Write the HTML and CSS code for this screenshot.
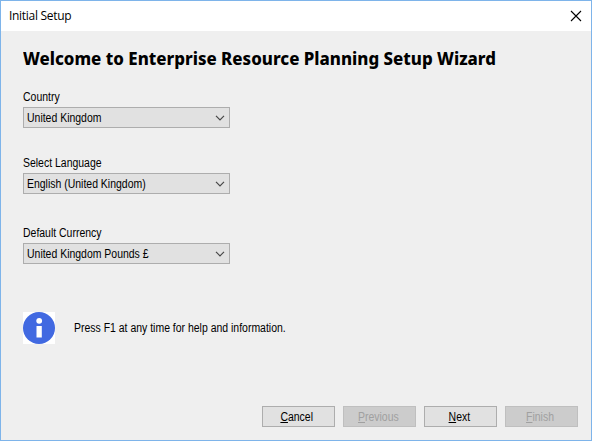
FILE: index.html
```html
<!DOCTYPE html>
<html lang="en">
<head>
<meta charset="utf-8">
<title>Initial Setup</title>
<link rel="stylesheet" href="styles.css">
</head>
<body>
<div class="window">
  <header class="titlebar">
    <span class="caption">Initial Setup</span>
    <svg class="close" width="12" height="12" viewBox="0 0 12 12"><path d="M1 1 11 11M11 1 1 11"/></svg>
  </header>
  <main class="content">
    <h1>Welcome to Enterprise Resource Planning Setup Wizard</h1>
    <div class="field country">
      <span class="label"><span class="text">Country</span></span>
      <div class="combo"><span class="text">United Kingdom</span><svg width="10" height="6" viewBox="0 0 10 6"><path d="M1 .8 5 4.8 9 .8"/></svg></div>
    </div>
    <div class="field language">
      <span class="label"><span class="text">Select Language</span></span>
      <div class="combo"><span class="text">English (United Kingdom)</span><svg width="10" height="6" viewBox="0 0 10 6"><path d="M1 .8 5 4.8 9 .8"/></svg></div>
    </div>
    <div class="field currency">
      <span class="label"><span class="text">Default Currency</span></span>
      <div class="combo"><span class="text">United Kingdom Pounds £</span><svg width="10" height="6" viewBox="0 0 10 6"><path d="M1 .8 5 4.8 9 .8"/></svg></div>
    </div>
    <div class="info">
      <svg width="32" height="32" viewBox="0 0 32 32"><rect width="32" height="32" fill="#fff"/><circle cx="16" cy="16" r="16" fill="#4169e1"/><circle cx="16.2" cy="8.8" r="2.9" fill="#fff"/><rect x="13.5" y="14" width="5.3" height="11.5" fill="#fff"/></svg>
      <span class="text">Press F1 at any time for help and information.</span>
    </div>
  </main>
  <footer class="buttons">
    <button><span class="text"><u>C</u>ancel</span></button>
    <button disabled><span class="text"><u>P</u>revious</span></button>
    <button><span class="text"><u>N</u>ext</span></button>
    <button disabled><span class="text"><u>F</u>inish</span></button>
  </footer>
</div>
</body>
</html>
```
FILE: styles.css
```css
* { box-sizing: border-box; }
body { margin: 0; font: 12px/14px "Liberation Sans", sans-serif; color: #000; }
.window {
  width: 592px; height: 441px;
  border: 1px solid #7eb4ea;
  background: #efefef;
  display: flex; flex-direction: column;
  white-space: nowrap;
}
.titlebar {
  height: 30px; background: #fff;
  display: flex; align-items: center; justify-content: space-between;
  padding: 0 9px 0 8px;
}
.caption { font: 12px/16px "Open Sans", sans-serif; letter-spacing: -0.3px; }
.close path { fill: none; stroke: #000; stroke-width: 1.1; }
.content { flex: 1; padding: 15px 22px 0; }
h1 {
  margin: 0; height: 25px; font: 800 18px/24px "Noto Sans", sans-serif;
  transform: scaleX(0.937); transform-origin: left center;
}
.text { display: inline-block; transform: scaleX(0.872); transform-origin: left center; }
.field { display: flex; flex-direction: column; width: 207px; }
.country { margin-top: 19px; }
.language { margin-top: 28px; }
.currency { margin-top: 32px; }
.label { height: 17px; }
.combo {
  height: 21px; border: 1px solid #adadad; background: #e1e1e1;
  display: flex; align-items: center; justify-content: space-between;
  padding: 0 4px 0 3px;
}
.combo path { fill: none; stroke: #484848; stroke-width: 1.2; }
.info { display: flex; align-items: center; gap: 19px; margin-top: 48px; }
.buttons { display: flex; justify-content: flex-end; gap: 8px; padding: 0 13px 13px 0; }
button {
  width: 73px; height: 21px; padding: 0 3px 0 0;
  border: 1px solid #adadad; background: #e1e1e1;
  font: inherit; color: #000;
}
button .text { transform-origin: center; }
button:disabled { border-color: #bfbfbf; background: #ccc; color: #a0a0a0; }
u { text-underline-offset: 1px; text-decoration-thickness: 1px; }
```
